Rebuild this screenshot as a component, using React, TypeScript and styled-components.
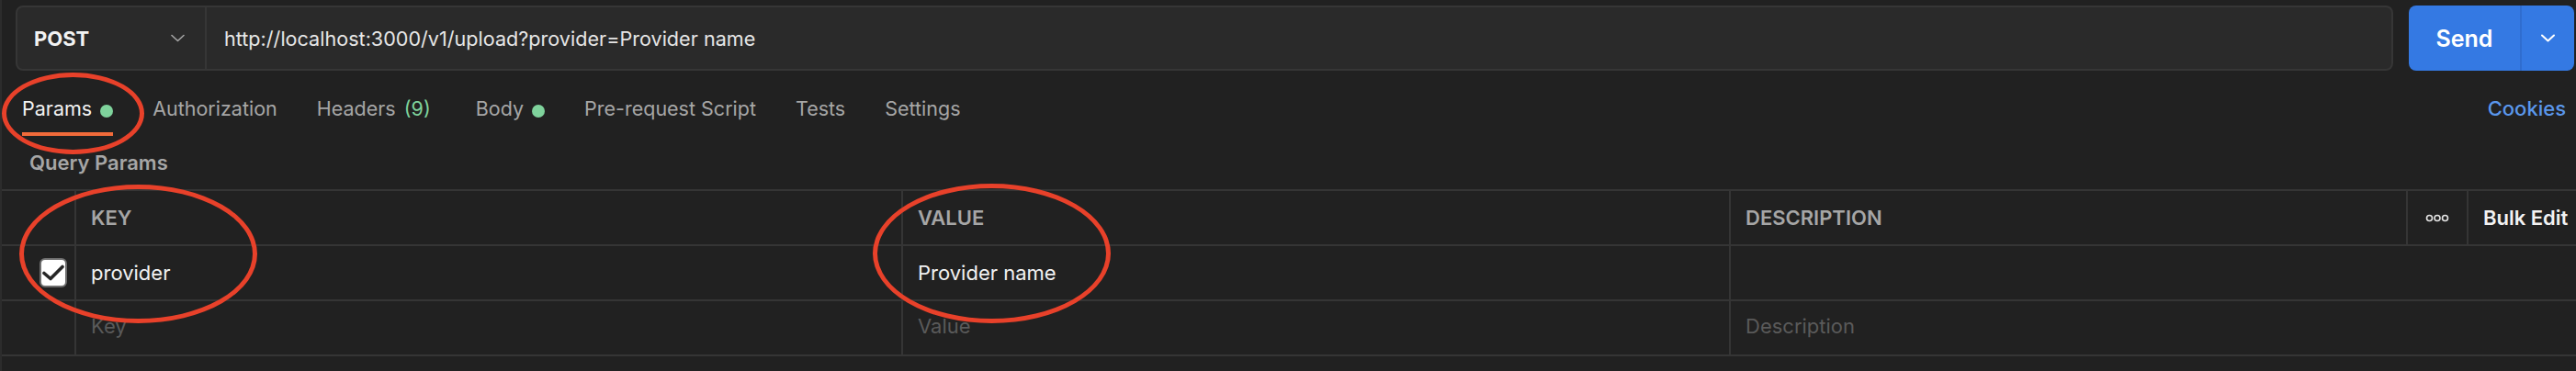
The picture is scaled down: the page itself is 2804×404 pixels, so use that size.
import styled, { createGlobalStyle } from 'styled-components';

const GlobalStyle = createGlobalStyle`
  html, body {
    margin: 0;
    padding: 0;
    background: #212121;
  }
  body {
    font-family: Inter, "Noto Sans", sans-serif;
    -webkit-font-smoothing: antialiased;
  }
`;

const Page = styled.div`
  position: relative;
  width: 2804px;
  height: 404px;
  box-sizing: border-box;
  border-left: 2px solid #2c2c2c;
  background: #212121;
  overflow: hidden;
`;

// request bar
const TopBar = styled.div`
  display: flex;
  gap: 17px;
  height: 71px;
  padding: 6px 2px 0 15px;
`;

const UrlGroup = styled.div`
  flex: 1;
  display: flex;
  box-sizing: border-box;
  border: 2px solid #363636;
  border-radius: 8px;
  background: #2a2a2a;
`;

const MethodSelect = styled.div`
  width: 206px;
  box-sizing: border-box;
  display: flex;
  align-items: center;
  justify-content: space-between;
  padding: 0 22px 0 18px;
  border-right: 2px solid #363636;
`;

const MethodLabel = styled.span`
  font-size: 22px;
  font-weight: 700;
  color: #f2f2f2;
`;

const UrlText = styled.div`
  display: flex;
  align-items: center;
  padding-left: 19px;
  font-size: 21.6px;
  color: #e6e6e6;
`;

const SendButton = styled.div`
  width: 180px;
  display: flex;
  border-radius: 8px;
  background: #3479e3;
  overflow: hidden;
`;

const SendLabel = styled.div`
  width: 121px;
  display: flex;
  align-items: center;
  justify-content: center;
  border-right: 2px solid #2f6dcf;
  font-size: 25px;
  font-weight: 600;
  color: #ffffff;
`;

const SendArrow = styled.div`
  flex: 1;
  display: flex;
  align-items: center;
  justify-content: center;
`;

// tabs
const TabsRow = styled.div`
  display: flex;
  justify-content: space-between;
  align-items: flex-start;
  margin-top: 28px;
  padding: 0 11px 0 22px;
`;

const TabList = styled.div`
  display: flex;
  gap: 43px;
`;

const Tab = styled.div<{ $active?: boolean }>`
  display: flex;
  align-items: center;
  gap: 9px;
  font-size: 21.5px;
  line-height: 26px;
  padding-bottom: 13px;
  border-bottom: 4px solid ${({ $active }) => ($active ? '#f26b3a' : 'transparent')};
  color: ${({ $active }) => ($active ? '#f2f2f2' : '#a6a6a6')};
`;

const Dot = styled.span`
  width: 14px;
  height: 14px;
  margin-top: 6px;
  border-radius: 50%;
  background: #7fd39c;
`;

const Count = styled.span`
  margin-right: 6px;
  color: #7fd39c;
`;

const CookiesLink = styled.span`
  font-size: 22px;
  line-height: 26px;
  font-weight: 500;
  color: #5a97ec;
`;

const SectionTitle = styled.div`
  margin: 16px 0 0 30px;
  font-size: 22px;
  line-height: 26px;
  font-weight: 600;
  color: #a6a6a6;
`;

// params table
const Table = styled.div`
  margin-top: 16px;
  border-top: 2px solid #353535;
`;

const Row = styled.div`
  display: grid;
  grid-template-columns: 81px 900px 901px 1fr 66px 117px;
  height: 60px;
  box-sizing: border-box;
  border-bottom: 2px solid #353535;
`;

const Cell = styled.div<{ $tone?: 'head' | 'value' | 'empty' | 'strong'; $last?: boolean; $wide?: boolean }>`
  display: flex;
  align-items: center;
  padding-left: 16px;
  padding-bottom: ${({ $tone }) => ($tone === 'empty' ? '5px' : '0')};
  font-size: 22px;
  font-weight: ${({ $tone }) => ($tone === 'head' || $tone === 'strong' ? 600 : 400)};
  color: ${({ $tone }) =>
    $tone === 'head' ? '#a6a6a6' : $tone === 'empty' ? '#5a5a5a' : '#f2f2f2'};
  border-right: ${({ $last }) => ($last ? 'none' : '2px solid #353535')};
  grid-column: ${({ $wide }) => ($wide ? '4 / -1' : 'auto')};
`;

const CheckCell = styled.div`
  display: flex;
  align-items: center;
  justify-content: flex-end;
  padding-right: 8px;
  border-right: 2px solid #353535;
`;

const IconCell = styled.div`
  display: flex;
  align-items: center;
  justify-content: center;
  border-right: 2px solid #353535;
`;

const Checkbox = styled.span`
  width: 30px;
  height: 32px;
  box-sizing: border-box;
  display: flex;
  align-items: center;
  justify-content: center;
  background: #ffffff;
  border: 2px solid #6e6e6e;
  border-radius: 6px;
`;

// red marker rings drawn over the screenshot
const Annotation = styled.div<{ $left: number; $top: number; $w: number; $h: number }>`
  position: absolute;
  left: ${({ $left }) => $left}px;
  top: ${({ $top }) => $top}px;
  width: ${({ $w }) => $w}px;
  height: ${({ $h }) => $h}px;
  box-sizing: border-box;
  border: 5px solid #e8412a;
  border-radius: 50%;
  pointer-events: none;
`;

const Chevron = ({ color, width }: { color: string; width: number }) => (
  <svg width="15" height="9" viewBox="0 0 15 9" fill="none">
    <path d="M1 1.5 L7.5 7.5 L14 1.5" stroke={color} strokeWidth={width} strokeLinecap="round" strokeLinejoin="round" />
  </svg>
);

const MoreIcon = () => (
  <svg width="26" height="9" viewBox="0 0 26 9" fill="none">
    <circle cx="4.5" cy="4.5" r="3" stroke="#e6e6e6" strokeWidth="1.6" />
    <circle cx="13" cy="4.5" r="3" stroke="#e6e6e6" strokeWidth="1.6" />
    <circle cx="21.5" cy="4.5" r="3" stroke="#e6e6e6" strokeWidth="1.6" />
  </svg>
);

const CheckMark = () => (
  <svg width="24" height="18" viewBox="0 0 24 18" fill="none">
    <path d="M2 9.5 L9 15.5 L22 2.5" stroke="#262626" strokeWidth="3.6" strokeLinecap="round" strokeLinejoin="round" />
  </svg>
);

const tabs = [
  { label: 'Authorization' },
  { label: 'Headers', count: 9 },
  { label: 'Body', dot: true },
  { label: 'Pre-request Script' },
  { label: 'Tests' },
  { label: 'Settings' },
];

function App() {
  return (
    <>
      <GlobalStyle />
      <Page>
        <TopBar>
          <UrlGroup>
            <MethodSelect>
              <MethodLabel>POST</MethodLabel>
              <Chevron color="#a6a6a6" width={1.6} />
            </MethodSelect>
            <UrlText>http://localhost:3000/v1/upload?provider=Provider name</UrlText>
          </UrlGroup>
          <SendButton>
            <SendLabel>Send</SendLabel>
            <SendArrow>
              <Chevron color="#ffffff" width={2} />
            </SendArrow>
          </SendButton>
        </TopBar>

        <TabsRow>
          <TabList>
            <Tab $active>
              Params
              <Dot />
            </Tab>
            {tabs.map((tab) => (
              <Tab key={tab.label}>
                {tab.label}
                {tab.count !== undefined && <Count>({tab.count})</Count>}
                {tab.dot && <Dot />}
              </Tab>
            ))}
          </TabList>
          <CookiesLink>Cookies</CookiesLink>
        </TabsRow>

        <SectionTitle>Query Params</SectionTitle>

        <Table>
          <Row>
            <CheckCell />
            <Cell $tone="head">KEY</Cell>
            <Cell $tone="head">VALUE</Cell>
            <Cell $tone="head">DESCRIPTION</Cell>
            <IconCell>
              <MoreIcon />
            </IconCell>
            <Cell $tone="strong" $last>
              Bulk Edit
            </Cell>
          </Row>
          <Row>
            <CheckCell>
              <Checkbox>
                <CheckMark />
              </Checkbox>
            </CheckCell>
            <Cell>provider</Cell>
            <Cell>Provider name</Cell>
            <Cell $wide $last />
          </Row>
          <Row>
            <CheckCell />
            <Cell $tone="empty">Key</Cell>
            <Cell $tone="empty">Value</Cell>
            <Cell $tone="empty" $wide $last>
              Description
            </Cell>
          </Row>
        </Table>

        <Annotation $left={0} $top={79} $w={155} $h={89} />
        <Annotation $left={19} $top={201} $w={259} $h={151} />
        <Annotation $left={948} $top={200} $w={259} $h={152} />
      </Page>
    </>
  );
}

export default App;
